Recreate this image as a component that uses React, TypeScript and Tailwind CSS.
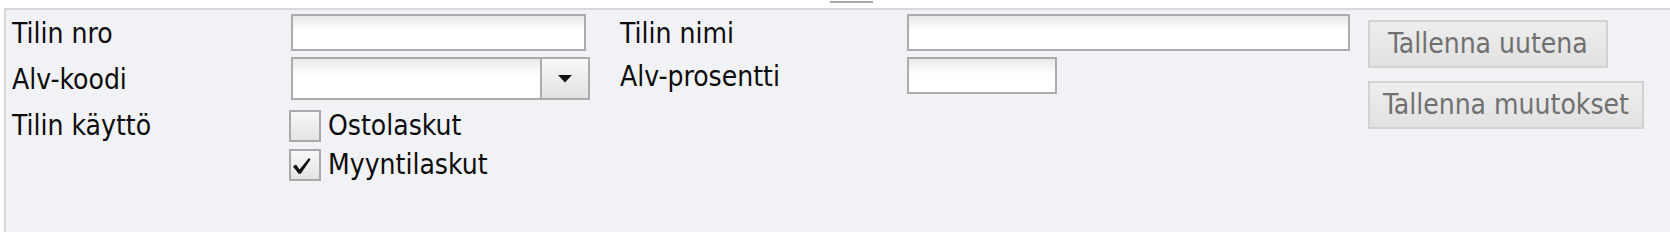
import React from "react";

function TextInput({ width }: { width: string }) {
  return (
    <div
      className={`${width} h-[37px] border-2 border-[#acacac] bg-linear-to-b from-[#e9e9e9] via-white via-45% to-white`}
    />
  );
}

function Checkbox({ checked, label }: { checked?: boolean; label: string }) {
  return (
    <div className="flex items-center h-[32px] -ml-[2px]">
      <div className="w-[32px] h-[32px] border-2 border-[#a9a9a9] bg-linear-to-b from-[#f8f8f8] to-[#e3e3e3] flex items-center justify-center">
        {checked && (
          <svg width="28" height="28" viewBox="0 0 28 28">
            <path d="M2 15.5 L5 13.5 L8.5 18.5 L18 7 L19.5 8.5 L9.8 22.8 L7.6 22.8 Z" fill="#111" />
          </svg>
        )}
      </div>
      <span className="ml-[7px] leading-none">{label}</span>
    </div>
  );
}

export default function App() {
  return (
    <div className="w-[1670px] h-[232px] bg-white flex flex-col font-['DejaVu_Sans_Condensed','DejaVu_Sans',sans-serif] text-[28px] text-[#0d0d0d]">
      {/* tab marker */}
      <div className="h-[8px] pl-[830px] pt-[1px]">
        <div className="h-[2px] w-[43px] bg-[#a9a9a9]" />
      </div>

      <div className="flex-1 ml-[4px] border-l-2 border-t-2 border-[#d6d7db] bg-[#f1f2f6] flex items-start pl-[6px] pt-[4px]">
        <div className="grid grid-cols-[279px_329px_287px_443px] gap-y-[6px]">
          <div className="h-[37px] flex items-center leading-none pt-[2px]">Tilin nro</div>
          <div className="h-[37px]">
            <TextInput width="w-[295px]" />
          </div>
          <div className="h-[37px] flex items-center leading-none pt-[2px]">Tilin nimi</div>
          <div className="h-[37px]">
            <TextInput width="w-[443px]" />
          </div>

          <div className="h-[43px] flex items-center leading-none pt-[2px]">Alv-koodi</div>
          <div className="h-[43px]">
            <div className="w-[299px] h-[43px] border-2 border-[#acacac] flex">
              <div className="flex-1 bg-linear-to-b from-[#e9e9e9] via-white via-45% to-white" />
              <div className="w-[48px] border-l-2 border-[#acacac] bg-linear-to-b from-[#f9f9f9] to-[#e2e2e2] flex items-center justify-center">
                <svg width="14" height="8" viewBox="0 0 14 8">
                  <path d="M0 0 H14 L7 7.5 Z" fill="#111" />
                </svg>
              </div>
            </div>
          </div>
          <div className="h-[37px] flex items-center leading-none pt-[2px]">Alv-prosentti</div>
          <div className="h-[37px]">
            <TextInput width="w-[150px]" />
          </div>

          <div className="mt-[4px] h-[32px] flex items-center leading-none">Tilin käyttö</div>
          <div className="mt-[4px] flex flex-col gap-[7px]">
            <Checkbox label="Ostolaskut" />
            <Checkbox checked label="Myyntilaskut" />
          </div>
        </div>

        <div className="ml-[18px] mt-[6px] flex flex-col items-start gap-[13px] text-[28px] text-[#707070]">
          <button className="h-[48px] px-[18px] border-2 border-[#d2d2d2] bg-linear-to-b from-[#eeeeee] to-[#e1e1e1] leading-none">
            Tallenna uutena
          </button>
          <button className="h-[48px] px-[13px] border-2 border-[#d2d2d2] bg-linear-to-b from-[#eeeeee] to-[#e1e1e1] leading-none">
            Tallenna muutokset
          </button>
        </div>
      </div>
    </div>
  );
}
